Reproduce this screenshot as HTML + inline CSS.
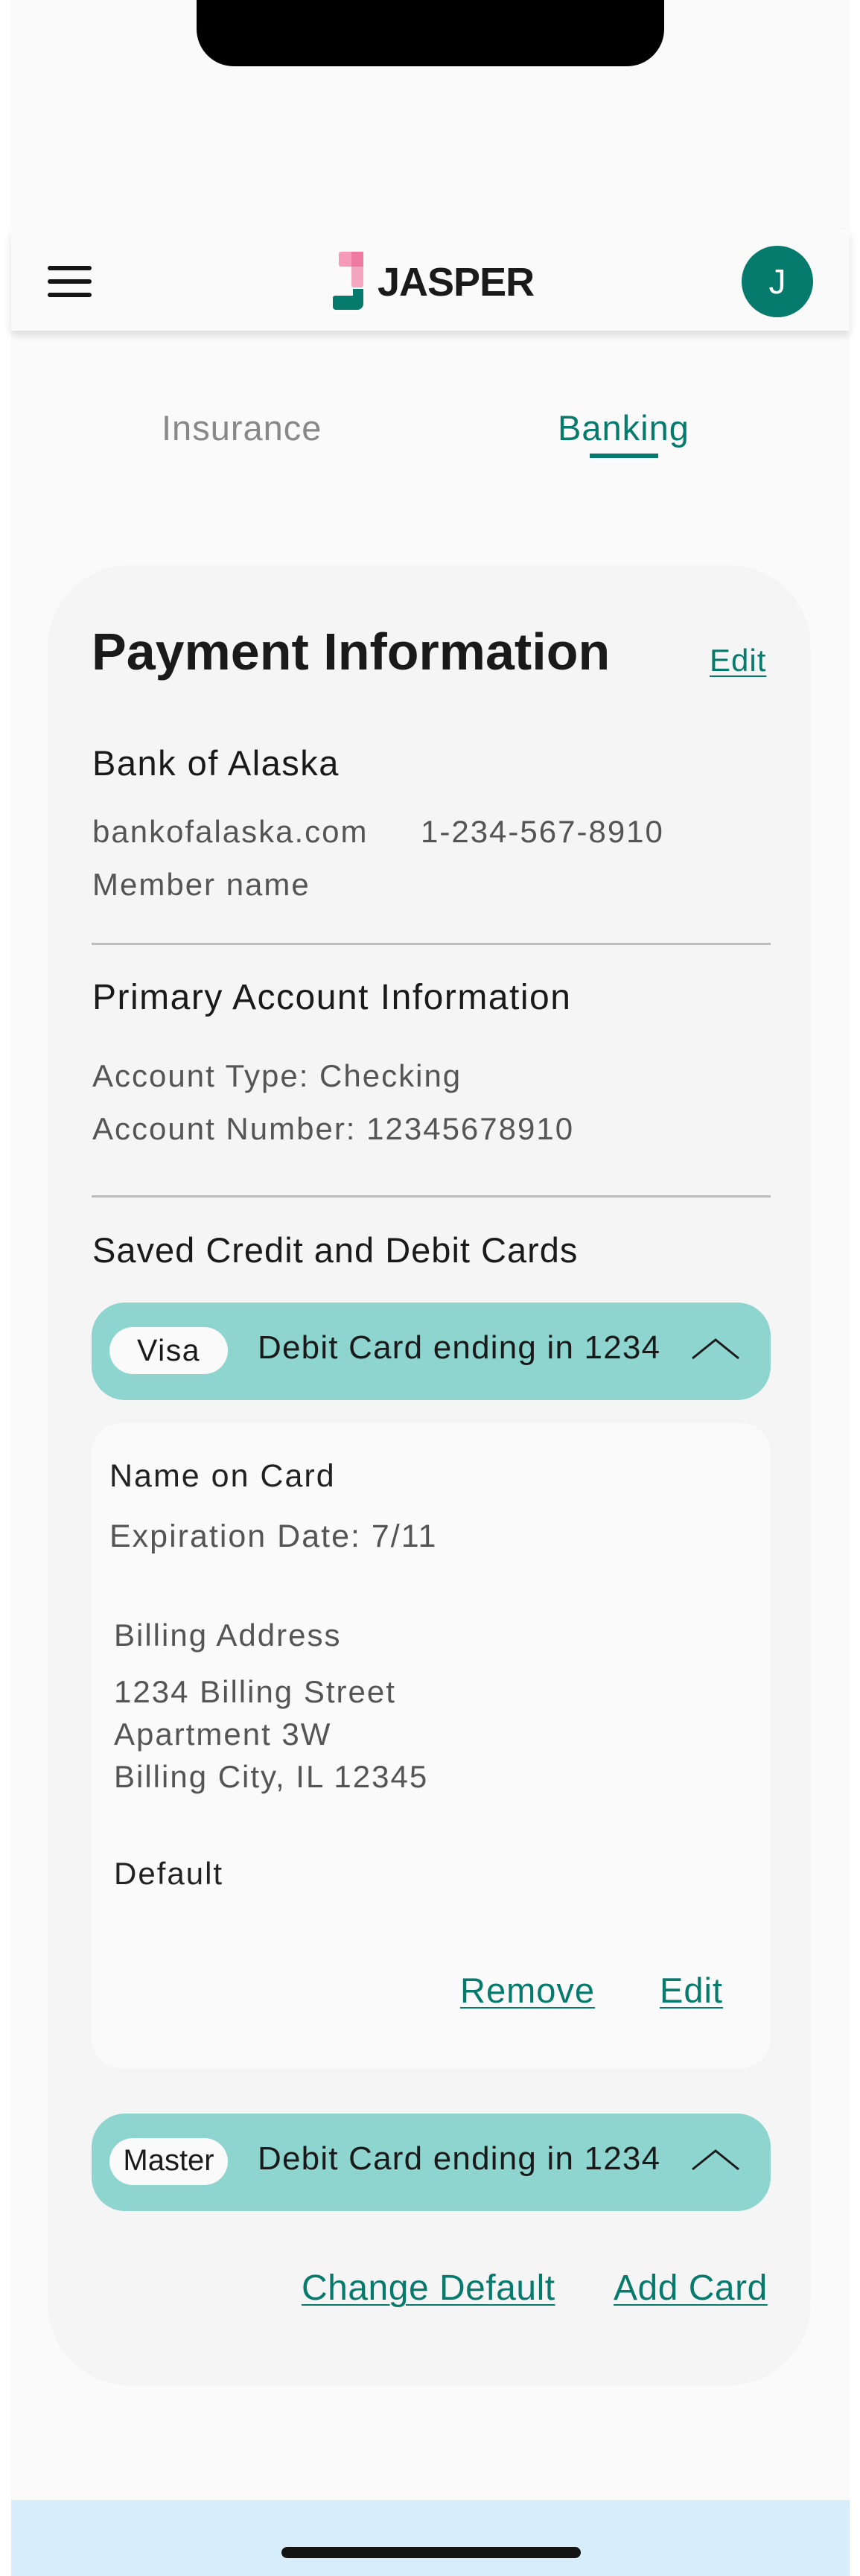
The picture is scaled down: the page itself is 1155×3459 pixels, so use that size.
<!DOCTYPE html>
<html><head><meta charset="utf-8"><style>
*{margin:0;padding:0;box-sizing:border-box}
body{width:1155px;height:3459px;background:#fff;position:relative;overflow:hidden;font-family:"Liberation Sans",sans-serif}
.a{position:absolute;white-space:nowrap}
.frame{position:absolute;left:15px;top:0;width:1126px;height:3459px;background:#fafafa}
.link{color:#077a6e;text-decoration:underline;text-decoration-thickness:2px;text-underline-offset:6px}
.g{color:#555;letter-spacing:2px}
.d{color:#222}
.h{font-size:47px;letter-spacing:1.5px;color:#1a1a1a}
</style></head><body>
<div class="frame"></div>
<div class="a" style="left:264px;top:0;width:628px;height:89px;background:#000;border-radius:0 0 50px 50px"></div>
<div class="a" style="left:15px;top:308px;width:1126px;height:136px;background:#fafafa;box-shadow:0 6px 10px rgba(0,0,0,0.12)"></div>
<div class="a" style="left:64px;top:357px;width:59px;height:6px;background:#151515;border-radius:3px"></div>
<div class="a" style="left:64px;top:375px;width:59px;height:6px;background:#151515;border-radius:3px"></div>
<div class="a" style="left:64px;top:393px;width:59px;height:6px;background:#151515;border-radius:3px"></div>
<svg class="a" style="left:445px;top:336px" width="46" height="82" viewBox="0 0 46 82">
<rect x="10" y="2" width="33" height="20" rx="3" fill="#f59ab8"/>
<rect x="27" y="2" width="16" height="48" rx="3" fill="#f4a5c0"/>
<rect x="27" y="2" width="16" height="20" fill="#ef7aa2"/>
<path d="M29 52h14v20a8 8 0 0 1-8 8H6a4 4 0 0 1-4-4V64a3 3 0 0 1 3-3h24z" fill="#077a6e"/>
</svg>
<div class="a" style="left:507px;top:346px;font-size:54px;font-weight:bold;color:#1a1a1a;letter-spacing:-1px;line-height:66px">JASPER</div>
<div class="a" style="left:996px;top:330px;width:96px;height:96px;border-radius:50%;background:#077a6e;color:#fff;font-size:46px;text-align:center;line-height:96px">J</div>
<div class="a" style="left:217px;top:547px;font-size:47px;color:#888;line-height:56px;letter-spacing:1px">Insurance</div>
<div class="a" style="left:749px;top:547px;font-size:47px;color:#077a6e;line-height:56px;letter-spacing:1px">Banking</div>
<div class="a" style="left:792px;top:609px;width:92px;height:6px;background:#077a6e"></div>
<div class="a" style="left:64px;top:759px;width:1025px;height:2444px;background:#f5f5f5;border-radius:110px"></div>
<div class="a d" style="left:123px;top:835px;font-size:70px;font-weight:bold;color:#1a1a1a;line-height:80px">Payment Information</div>
<div class="a link" style="left:953px;top:862px;font-size:42px;line-height:50px;letter-spacing:1px">Edit</div>
<div class="a h" style="left:124px;top:998px;line-height:54px">Bank of Alaska</div>
<div class="a g" style="left:124px;top:1090px;font-size:42px;line-height:54px">bankofalaska.com</div>
<div class="a g" style="left:565px;top:1090px;font-size:42px;line-height:54px">1-234-567-8910</div>
<div class="a g" style="left:124px;top:1161px;font-size:42px;line-height:54px">Member name</div>
<div class="a" style="left:123px;top:1266px;width:912px;height:3px;background:#bdbdbd"></div>
<div class="a h" style="left:124px;top:1313px;line-height:54px;font-size:48px">Primary Account Information</div>
<div class="a g" style="left:124px;top:1418px;font-size:42px;line-height:54px">Account Type: Checking</div>
<div class="a g" style="left:124px;top:1489px;font-size:42px;line-height:54px">Account Number: 12345678910</div>
<div class="a" style="left:123px;top:1605px;width:912px;height:3px;background:#bdbdbd"></div>
<div class="a h" style="left:124px;top:1652px;line-height:54px;letter-spacing:1px">Saved Credit and Debit Cards</div>
<div class="a" style="left:123px;top:1749px;width:912px;height:131px;background:#8dd5ce;border-radius:45px"></div>
<div class="a" style="left:147px;top:1782px;width:159px;height:63px;background:#fafafa;border-radius:32px;font-size:41px;text-align:center;line-height:63px;color:#1a1a1a;letter-spacing:1.5px">Visa</div>
<div class="a" style="left:346px;top:1783px;font-size:44px;line-height:54px;color:#1a1a1a;letter-spacing:1.2px">Debit Card ending in 1234</div>
<svg class="a" style="left:928px;top:1796px" width="66" height="30"><path d="M2 28L33 3L64 28" fill="none" stroke="#1a1a1a" stroke-width="3"/></svg>
<div class="a" style="left:123px;top:1911px;width:912px;height:866px;background:#fafafa;border-radius:40px"></div>
<div class="a d" style="left:147px;top:1955px;font-size:43px;line-height:54px;letter-spacing:2px">Name on Card</div>
<div class="a g" style="left:147px;top:2036px;font-size:43px;line-height:54px">Expiration Date: 7/11</div>
<div class="a g" style="left:153px;top:2169px;font-size:42px;line-height:54px">Billing Address</div>
<div class="a g" style="left:153px;top:2243px;font-size:42px;line-height:57px">1234 Billing Street<br>Apartment 3W<br>Billing City, IL 12345</div>
<div class="a d" style="left:153px;top:2489px;font-size:42px;line-height:54px;letter-spacing:2px">Default</div>
<div class="a link" style="left:618px;top:2645px;font-size:47px;line-height:56px;letter-spacing:1px">Remove</div>
<div class="a link" style="left:886px;top:2645px;font-size:47px;line-height:56px;letter-spacing:1px">Edit</div>
<div class="a" style="left:123px;top:2838px;width:912px;height:131px;background:#8dd5ce;border-radius:45px"></div>
<div class="a" style="left:147px;top:2871px;width:159px;height:63px;background:#fafafa;border-radius:32px;font-size:40px;text-align:center;line-height:60px;color:#1a1a1a">Master</div>
<div class="a" style="left:346px;top:2872px;font-size:44px;line-height:54px;color:#1a1a1a;letter-spacing:1.2px">Debit Card ending in 1234</div>
<svg class="a" style="left:928px;top:2885px" width="66" height="30"><path d="M2 28L33 3L64 28" fill="none" stroke="#1a1a1a" stroke-width="3"/></svg>
<div class="a link" style="left:405px;top:3045px;font-size:48px;line-height:56px;letter-spacing:0.5px">Change Default</div>
<div class="a link" style="left:824px;top:3045px;font-size:48px;line-height:56px;letter-spacing:0.5px">Add Card</div>
<div class="a" style="left:15px;top:3357px;width:1126px;height:102px;background:#d7eefa"></div>
<div class="a" style="left:378px;top:3420px;width:402px;height:15px;background:#151515;border-radius:8px"></div>
</body></html>
